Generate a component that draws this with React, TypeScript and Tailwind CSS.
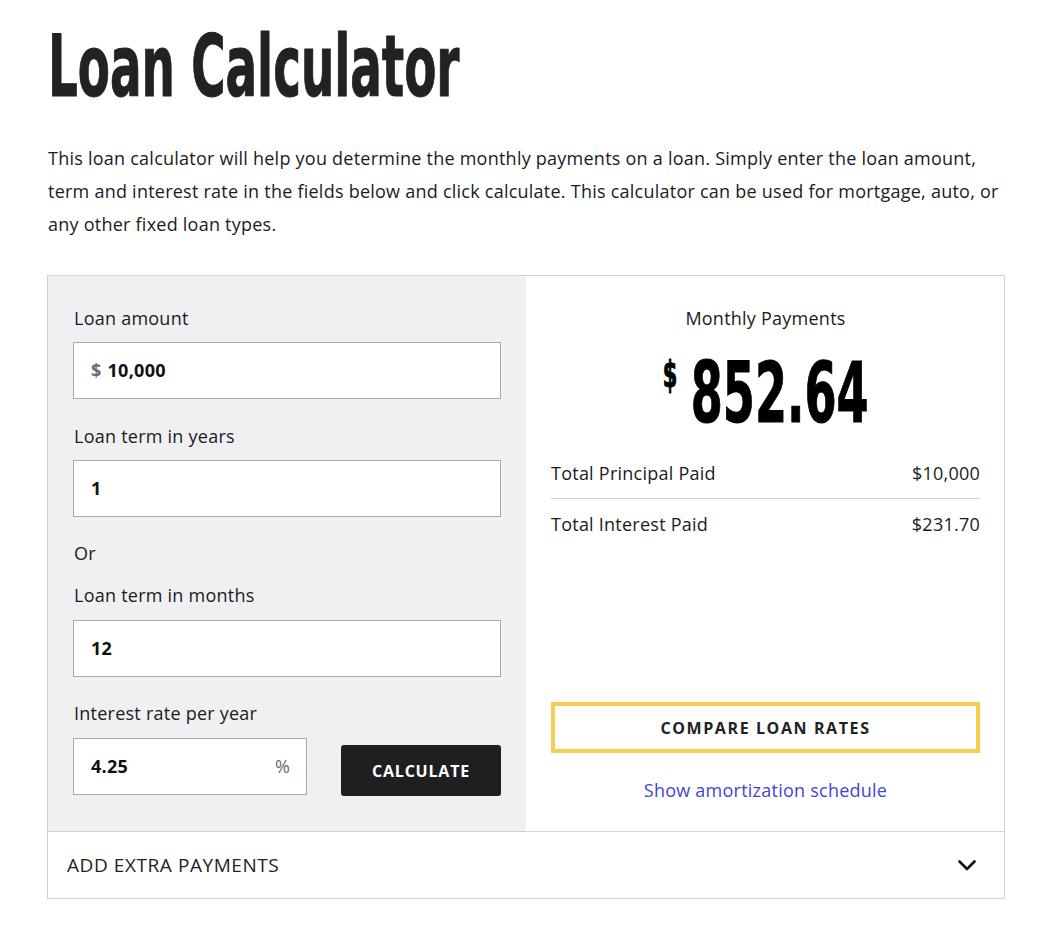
import React from "react";

const body = { fontFamily: '"Open Sans", "Liberation Sans", sans-serif' };
const condensed = { fontFamily: '"DejaVu Sans Condensed", "DejaVu Sans", sans-serif' };

function Field({ label, value, prefix, suffix, className = "" }: { label?: string; value: string; prefix?: string; suffix?: string; className?: string }) {
  return (
    <div className={"flex h-[57px] items-center border border-[#a9a9a9] bg-white pl-[17px] pr-[16px] " + className}>
      {prefix && <span className="mr-[6px] text-[18px] font-bold text-[#6b6b6b]">{prefix}</span>}
      <input
        readOnly
        value={value}
        aria-label={label}
        className="min-w-0 flex-1 bg-transparent text-[18px] font-bold tracking-[0.015em] text-[#111] outline-none"
        style={body}
      />
      {suffix && <span className="text-[18px] text-[#6b6b6b]">{suffix}</span>}
    </div>
  );
}

export default function App() {
  return (
    <div className="min-h-[926px] bg-white pl-[47px] tracking-[0.015em] text-[#1b1b1b]" style={body}>
      <div className="h-[142px] overflow-hidden pl-[1px] pt-[23px]">
        <h1
          className="inline-block origin-left scale-x-[0.605] whitespace-nowrap text-[86px] font-bold leading-[86px] tracking-normal text-[#222] [-webkit-text-stroke:1px_#222]"
          style={condensed}
        >
          Loan Calculator
        </h1>
      </div>
      <p className="w-[958px] pl-[1px] text-[18px] leading-[33px] text-[#1b1b1b]">
        This loan calculator will help you determine the monthly payments on a loan. Simply enter the loan amount, term and interest rate in the fields below and click calculate. This calculator can be used for mortgage, auto, or any other fixed loan types.
      </p>

      <div className="mt-[34px] w-[958px] border border-[#d2d2d2]">
        <div className="grid grid-cols-[478px_1fr]">
          <div className="bg-[#f0f0f2] px-[25px] pb-[35px] pt-[30px]">
            <div className="mb-[12px] h-[24px] pl-[1px] text-[18px] leading-[24px]">Loan amount</div>
            <Field label="Loan amount" value="10,000" prefix="$" />
            <div className="mb-[12px] mt-[25px] h-[24px] pl-[1px] text-[18px] leading-[24px]">Loan term in years</div>
            <Field label="Loan term in years" value="1" />
            <div className="mt-[24px] h-[24px] pl-[1px] text-[18px] leading-[24px]">Or</div>
            <div className="mb-[13px] mt-[18px] h-[24px] pl-[1px] text-[18px] leading-[24px]">Loan term in months</div>
            <Field label="Loan term in months" value="12" />
            <div className="mb-[13px] mt-[24px] h-[24px] pl-[1px] text-[18px] leading-[24px]">Interest rate per year</div>
            <div className="flex items-start">
              <Field label="Interest rate per year" value="4.25" suffix="%" className="w-[234px]" />
              <button
                className="ml-[34px] mt-[7px] h-[51px] w-[161px] rounded-[3px] bg-[#1f1f1f] text-[16px] font-bold uppercase tracking-[0.05em] text-white"
                style={body}
              >
                Calculate
              </button>
            </div>
          </div>

          <div className="flex flex-col pb-[29px] pl-[25px] pr-[24px] pt-[30px]">
            <div className="h-[24px] text-center text-[18px] leading-[24px]">Monthly Payments</div>
            <div className="mt-[21px] flex h-[86px] justify-center">
              <div className="flex origin-center scale-x-[0.61] items-start tracking-normal text-black [-webkit-text-stroke:1px_#000]" style={condensed}>
                <span className="mr-[22px] mt-[4px] text-[38px] font-bold leading-[38px]">$</span>
                <span className="text-[84px] font-bold leading-[84px]">852.64</span>
              </div>
            </div>
            <div className="mt-[24px] flex h-[24px] items-center justify-between text-[18px] leading-[24px]">
              <span>Total Principal Paid</span>
              <span>$10,000</span>
            </div>
            <div className="mt-[13px] border-t border-[#cfcfcf]" />
            <div className="mt-[13px] flex h-[24px] items-center justify-between text-[18px] leading-[24px]">
              <span>Total Interest Paid</span>
              <span>$231.70</span>
            </div>
            <div className="flex-1" />
            <button
              className="h-[51px] w-full border-[4px] border-[#f8cd52] bg-white text-[16px] font-bold uppercase tracking-[0.1em] text-[#222]"
              style={body}
            >
              Compare Loan Rates
            </button>
            <a href="#" className="mt-[25px] block h-[24px] text-center text-[18px] leading-[24px] text-[#3f45d8]">
              Show amortization schedule
            </a>
          </div>
        </div>

        <div className="flex h-[67px] items-center justify-between border-t border-[#d2d2d2] pl-[19px] pr-[28px]">
          <span className="text-[19px] uppercase tracking-[0.03em] text-[#222]">Add extra payments</span>
          <svg width="18" height="11" viewBox="0 0 18 11" fill="none">
            <path d="M1.5 1.5 L9 9 L16.5 1.5" stroke="#111" strokeWidth="2.6" strokeLinecap="round" strokeLinejoin="round" />
          </svg>
        </div>
      </div>
    </div>
  );
}
